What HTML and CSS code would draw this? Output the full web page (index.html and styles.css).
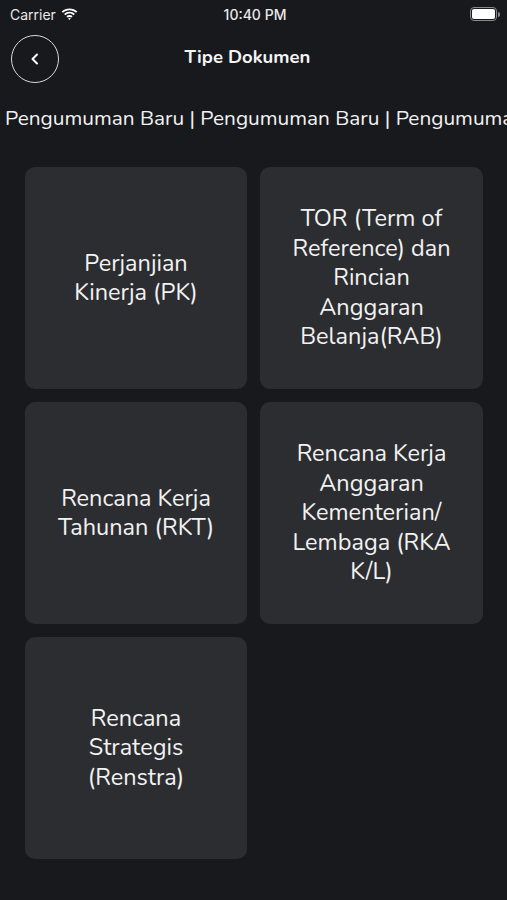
FILE: index.html
```html
<!DOCTYPE html>
<html lang="id">
<head>
<meta charset="UTF-8">
<meta name="viewport" content="width=device-width, initial-scale=1.0">
<title>Tipe Dokumen</title>
<link rel="stylesheet" href="styles.css">
</head>
<body>
<div class="status-bar">
    <div class="status-left">
        <span>Carrier</span>
        <svg class="wifi" width="17" height="12" viewBox="0 0 17 12">
            <path d="M8.5 2.2c2.5 0 4.8 1 6.5 2.6l1.3-1.3C14.2 1.5 11.5.4 8.5.4S2.8 1.5.7 3.5L2 4.8c1.7-1.6 4-2.6 6.5-2.6z" fill="#fff"/>
            <path d="M8.5 5.6c1.6 0 3 .6 4.1 1.6l1.3-1.3C12.5 4.6 10.6 3.8 8.5 3.8S4.5 4.6 3.1 5.9l1.3 1.3c1.1-1 2.5-1.6 4.1-1.6z" fill="#fff"/>
            <path d="M8.5 8.9c.7 0 1.3.3 1.8.7l1.3-1.3c-.8-.8-1.9-1.2-3.1-1.2s-2.3.4-3.1 1.2l1.3 1.3c.5-.4 1.1-.7 1.8-.7zM8.5 12l1.4-1.4c-.4-.4-.9-.6-1.4-.6s-1 .2-1.4.6z" fill="#fff"/>
        </svg>
    </div>
    <div class="status-time">10:40 PM</div>
    <div class="status-right">
        <div class="battery"><div class="battery-level"></div></div>
        <div class="battery-cap"></div>
    </div>
</div>

<header class="nav">
    <a href="#" class="back-btn">
        <svg width="14" height="14" viewBox="0 0 14 14">
            <path d="M9 2.5L4.5 7L9 11.5" fill="none" stroke="#fff" stroke-width="2" stroke-linecap="round" stroke-linejoin="round"/>
        </svg>
    </a>
    <h1 class="nav-title">Tipe Dokumen</h1>
</header>

<div class="marquee">
    <span>Pengumuman Baru | Pengumuman Baru | Pengumuman Baru | Pengumuman Baru</span>
</div>

<div class="grid">
    <a href="#" class="card">Perjanjian Kinerja (PK)</a>
    <a href="#" class="card">TOR (Term of Reference) dan Rincian Anggaran Belanja(RAB)</a>
    <a href="#" class="card">Rencana Kerja Tahunan (RKT)</a>
    <a href="#" class="card">Rencana Kerja Anggaran Kementerian/ Lembaga (RKA K/L)</a>
    <a href="#" class="card">Rencana Strategis (Renstra)</a>
</div>
</body>
</html>
```
FILE: styles.css
```css
/* Tipe Dokumen */
body {
    font-family: "Nunito", "Lato", "Noto Sans", sans-serif;
    margin: 0;
    padding: 0;
    background-color: #18191d;
    color: #f2f2f2;
    width: 507px;
    height: 900px;
    overflow: hidden;
}

.status-bar {
    display: flex;
    align-items: center;
    justify-content: space-between;
    height: 28px;
    padding: 0 7px 0 10px;
    font-family: "Inter", "Liberation Sans", sans-serif;
    font-size: 14px;
    color: #e8e8e8;
}

.status-left {
    display: flex;
    align-items: center;
    gap: 5px;
    width: 120px;
}

.status-time {
    font-weight: 500;
    font-size: 14px;
}

.status-right {
    display: flex;
    align-items: center;
    justify-content: flex-end;
    width: 120px;
}

.battery {
    width: 23px;
    height: 10px;
    border: 1.5px solid #8a8a8c;
    border-radius: 4px;
    padding: 1px;
}

.battery-level {
    width: 100%;
    height: 100%;
    background-color: #fff;
    border-radius: 2px;
}

.battery-cap {
    width: 2px;
    height: 5px;
    background-color: #8a8a8c;
    border-radius: 0 2px 2px 0;
    margin-left: 1px;
}

.nav {
    display: flex;
    align-items: center;
    height: 62px;
    padding: 0 11px;
}

.back-btn {
    display: flex;
    align-items: center;
    justify-content: center;
    width: 46px;
    height: 46px;
    border: 1.5px solid #d8d8d8;
    border-radius: 50%;
    flex-shrink: 0;
}

.nav-title {
    flex: 1;
    margin: 0 60px 0 0;
    padding-bottom: 4px;
    text-align: center;
    font-size: 18.5px;
    font-weight: bold;
    color: #f4f4f4;
}

.marquee {
    white-space: nowrap;
    overflow: hidden;
    font-size: 20.8px;
    padding: 14px 0 0 5px;
    height: 34px;
    color: #f2f2f2;
}

.grid {
    display: grid;
    grid-template-columns: 222px 223px;
    grid-auto-rows: 222px;
    gap: 13px;
    padding: 29px 0 0 25px;
}

.card {
    display: flex;
    align-items: center;
    justify-content: center;
    text-align: center;
    padding: 0 26px;
    background-color: #2c2d31;
    border-radius: 10px;
    font-size: 23.5px;
    line-height: 29.5px;
    color: #f2f2f2;
    text-decoration: none;
}
```
